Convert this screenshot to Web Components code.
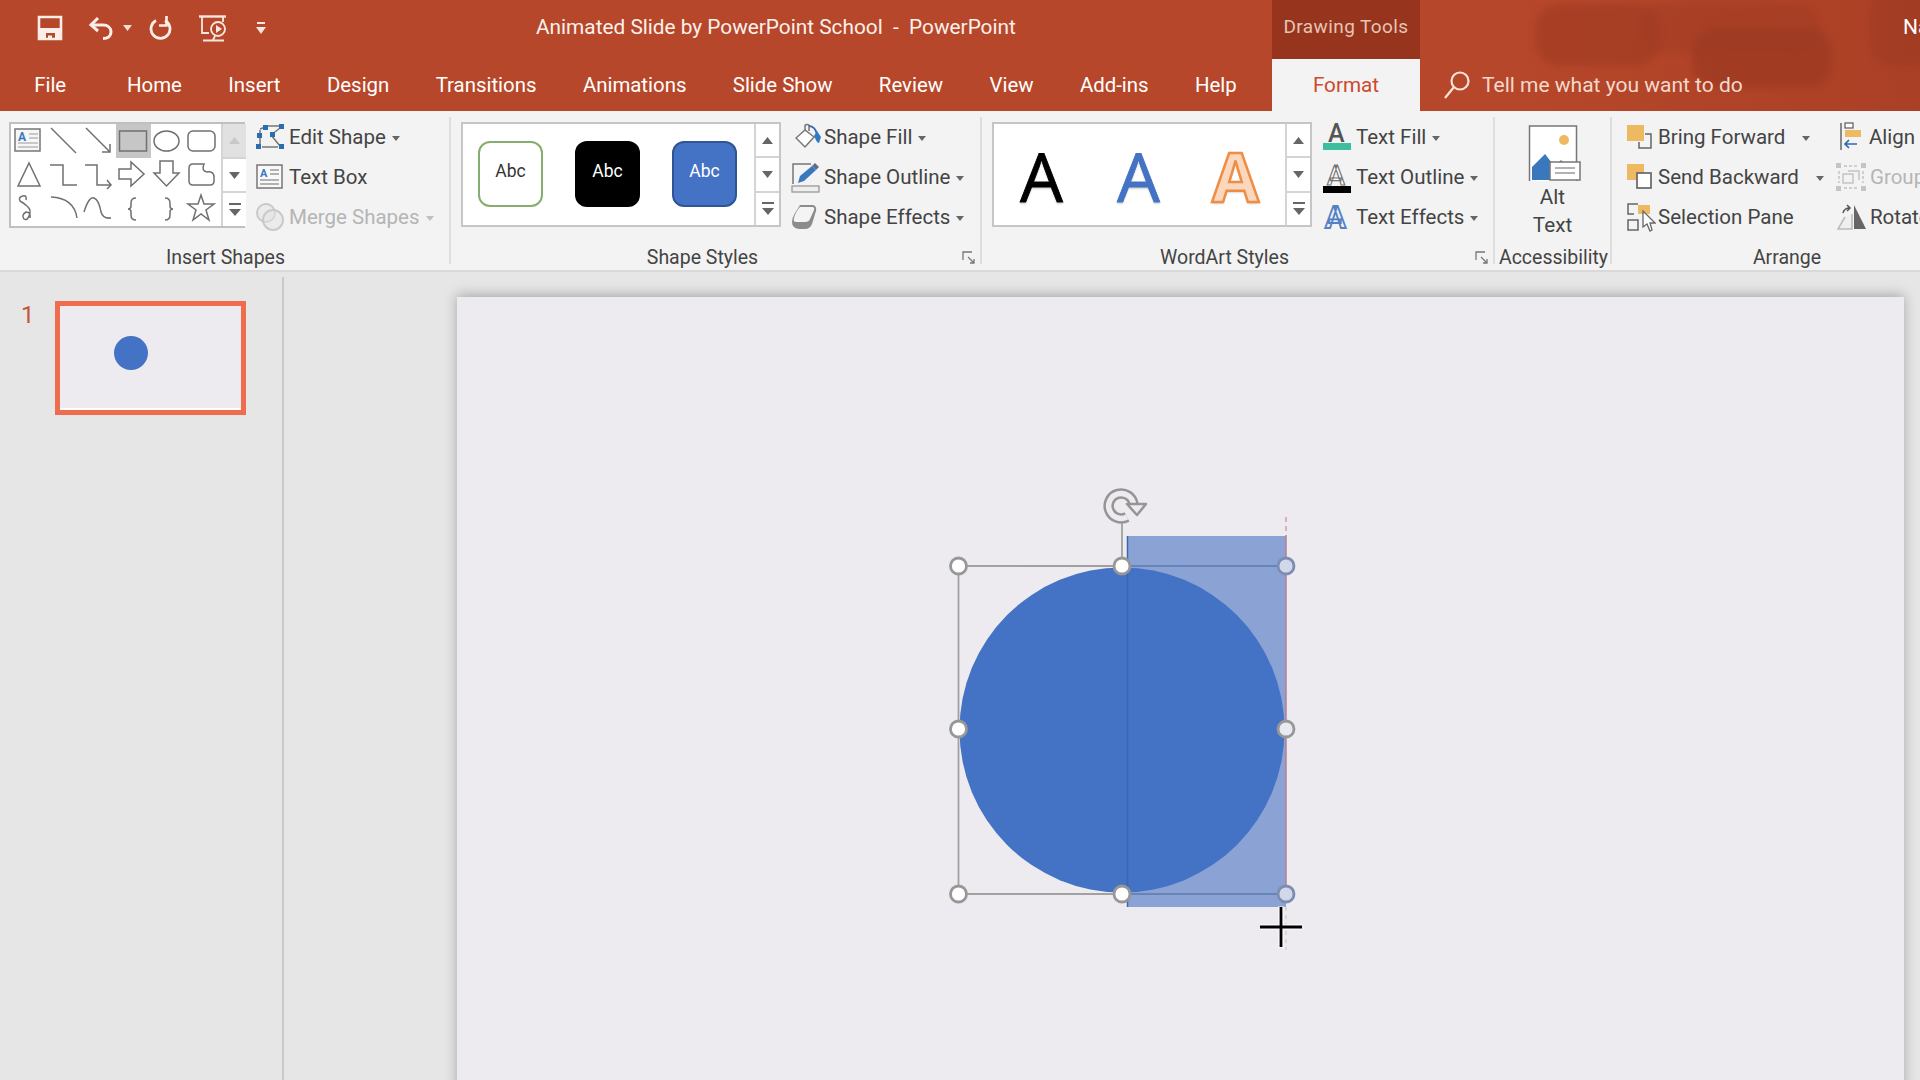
<!DOCTYPE html>
<html lang="en"><head><meta charset="utf-8"><title>Animated Slide by PowerPoint School - PowerPoint</title>
<style>html,body{margin:0;padding:0;background:#e6e6e6;overflow:hidden}body{font-family:Roboto,"Liberation Sans",sans-serif}</style>
</head><body>
<ppt-app>
  <ppt-header slot="head">
  <ppt-titlebar>
    <svg slot="qat" style="margin-left:37px" width="26" height="26" viewBox="0 0 26 26" fill="none" stroke="#fbeee8" stroke-width="2.600"><path d="M2 2H24V24H2Z"/><path d="M2 13H24V24H18V18H9V24H2Z" fill="#fbeee8" stroke="none"/><path d="M11 20.500h4v3h-4z" fill="#fbeee8" stroke="none"/></svg>
    <svg slot="qat" style="margin-left:25px" width="26" height="24" viewBox="0 0 26 24" fill="none" stroke="#fbeee8" stroke-width="3"><path d="M10 2L3 9L10 15"/><path d="M3 9H15C20 9 23 12 23 16C23 20 20 22.500 15 22.500"/></svg>
    <svg slot="qat" style="margin-left:9px" width="9" height="6" viewBox="0 0 9 6"><path d="M0 0H9L4.500 6Z" fill="#f3ddd5"/></svg>
    <svg slot="qat" style="margin-left:17px" width="25" height="24" viewBox="0 0 25 24" fill="none" stroke="#fbeee8" stroke-width="2.800"><path d="M7 4.500A9.500 9.500 0 1 0 16 4.500"/><path d="M17.500 0V9.500H10" stroke-width="2.600"/></svg>
    <svg slot="qat" style="margin-left:24px" width="30" height="27" viewBox="0 0 30 27" fill="none" stroke="#f7e7e1" stroke-width="1.800"><path d="M1 1.500H28" stroke-width="2.400"/><path d="M4 2V18H11"/><path d="M25 2V7"/><circle cx="20" cy="14" r="7"/><path d="M18 10L24 14L18 18Z" fill="#f7e7e1" stroke="none"/><path d="M5 25.500H26M15 25L17 21"/></svg>
    <svg slot="qat" style="margin-left:28px" width="10" height="13" viewBox="0 0 10 13"><path d="M1 1H9" stroke="#f7e7e1" stroke-width="2"/><path d="M0 5H10L5 12Z" fill="#f7e7e1"/></svg>
    <span slot="caption">Animated Slide by PowerPoint School &nbsp;-&nbsp; PowerPoint</span>
    <span slot="context">Drawing Tools</span>
    <span slot="user">Na</span>
  </ppt-titlebar>
  <ppt-tabs>
    <ppt-tab style="margin-right:14.500px">File</ppt-tab>
    <ppt-tab>Home</ppt-tab><ppt-tab>Insert</ppt-tab><ppt-tab>Design</ppt-tab><ppt-tab>Transitions</ppt-tab><ppt-tab>Animations</ppt-tab><ppt-tab>Slide Show</ppt-tab><ppt-tab>Review</ppt-tab><ppt-tab>View</ppt-tab><ppt-tab>Add-ins</ppt-tab><ppt-tab>Help</ppt-tab>
    <ppt-tab slot="active">Format</ppt-tab>
    <svg slot="search" width="28" height="30" viewBox="0 0 28 30" fill="none" stroke="#f7e3da" stroke-width="2.200"><circle cx="17" cy="11" r="8.500"/><path d="M11 17L2 28"/></svg>
    <span slot="tell">Tell me what you want to do</span>
  </ppt-tabs>
  </ppt-header>
  <ppt-ribbon slot="ribbon">
    <ppt-group label="Insert Shapes" width="451" pad="9">
      <ppt-shapes></ppt-shapes>
      <ppt-col style="margin-left:10px">
        <ppt-btn caret label="Edit Shape"><svg slot="icon" width="30" height="26" viewBox="0 0 30 26" fill="none"><path d="M5 5L13 2H24M25 4L16 11L25 22M5 22V6M7 23H23" stroke="#777" stroke-width="1.500"/><g fill="#2e6cb0"><rect x="8" y="1" width="5" height="5"/><rect x="24" y="0" width="5" height="5"/><rect x="2" y="9" width="5" height="5"/><rect x="15" y="8" width="5" height="5"/><rect x="1" y="20" width="5" height="5"/><rect x="24" y="20" width="5" height="5"/></g></svg></ppt-btn>
        <ppt-btn label="Text Box"><svg slot="icon" width="30" height="26" viewBox="0 0 30 26"><rect x="2" y="1" width="25" height="23" fill="#f8f8f8" stroke="#777" stroke-width="1.500"/><text x="5" y="13" font-size="11" font-weight="700" fill="#3a78bd" font-family="Roboto">A</text><path d="M15 6H24M15 10H24M5 16H24M5 20H24" stroke="#9a9a9a" stroke-width="1.300"/></svg></ppt-btn>
        <ppt-btn caret disabled label="Merge Shapes"><svg slot="icon" width="30" height="30" viewBox="0 0 30 30" fill="#e4e4e4" fill-opacity=".5" stroke="#c9c9c9" stroke-width="2"><circle cx="11" cy="11" r="9"/><circle cx="18" cy="18" r="10"/></svg></ppt-btn>
      </ppt-col>
    </ppt-group>
    <ppt-group label="Shape Styles" width="531" launcher pad="10" labelshift="28">
      <ppt-gallery w="320">
        <ppt-abc style="margin-left:15px;border:2px solid #85ad6e;background:#fff;color:#333">Abc</ppt-abc>
        <ppt-abc style="margin-left:32px;background:#000;color:#fff">Abc</ppt-abc>
        <ppt-abc style="margin-left:32px;background:#4472c4;border:2px solid #2f5597;color:#fff">Abc</ppt-abc>
      </ppt-gallery>
      <ppt-col style="margin-left:10px;--iw:33px">
        <ppt-btn caret label="Shape Fill"><svg slot="icon" style="margin-left:4px" width="26" height="28" viewBox="0 0 26 28" fill="none" stroke="#777" stroke-width="1.500"><path d="M10 9V3C10 1 14 1 14 3V8"/><path d="M10 7L1 15L10 24L19 14Z" fill="#fff"/><path d="M14 3C18 3 21 7 22 11" stroke="#2e6cb0" stroke-width="2"/><path d="M19 13L22 8L26 14L24 20C22 20 21 17 19 13Z" fill="#2e7bc4" stroke="none"/></svg></ppt-btn>
        <ppt-btn caret label="Shape Outline"><svg slot="icon" width="29" height="31" viewBox="0 0 29 31" fill="none"><path d="M2 22V2H20" stroke="#777" stroke-width="1.500"/><path d="M7 21L9 14L21 4L25 8L13 19Z" fill="#3a78bd"/><path d="M21 4L24 1L28 5L25 8Z" fill="#5c6f8f"/><rect x="1" y="24" width="27" height="6" fill="#eee" stroke="#999" stroke-width="1.300"/></svg></ppt-btn>
        <ppt-btn caret label="Shape Effects"><svg slot="icon" width="26" height="26" viewBox="0 0 26 26"><path d="M9 1H22Q26 2 25 7L21 20Q19 25 14 25H8Q1 24 1 18Q1 14 4 9Z" fill="#8c8c8c"/><path d="M9 3H21Q24 3 23 6L19 15Q18 18 14 18H5Q2 18 3 14Q5 7 9 3Z" fill="#f4f4f4"/></svg></ppt-btn>
      </ppt-col>
    </ppt-group>
    <ppt-group label="WordArt Styles" width="513" launcher pad="10" labelshift="28">
      <ppt-gallery w="320" disabledup>
        <ppt-wa style="margin-left:24px;color:#000;-webkit-text-stroke:.8px #000">A</ppt-wa>
        <ppt-wa style="margin-left:50px;color:#4472c4;-webkit-text-stroke:.8px #4472c4">A</ppt-wa>
        <ppt-wa style="margin-left:50px;color:#fbd8bd;font-weight:700;-webkit-text-stroke:2.500px #ee8d45">A</ppt-wa>
      </ppt-gallery>
      <ppt-col style="margin-left:11px;--iw:33px">
        <ppt-btn caret label="Text Fill"><svg slot="icon" width="28" height="28" viewBox="0 0 28 28"><text x="5" y="19" font-size="25" font-weight="500" fill="#555" font-family="Roboto">A</text><rect x="0" y="20" width="28" height="7" fill="#3dbf9e"/></svg></ppt-btn>
        <ppt-btn caret label="Text Outline"><svg slot="icon" width="28" height="31" viewBox="0 0 28 31"><text x="4" y="23" font-size="27" fill="#fff" stroke="#777" stroke-width="1.200" font-family="Roboto" font-weight="500">A</text><rect x="0" y="24" width="28" height="7" fill="#000"/></svg></ppt-btn>
        <ppt-btn caret label="Text Effects"><svg slot="icon" width="28" height="28" viewBox="0 0 28 28"><text x="2" y="25" font-size="31" fill="#eef3fb" stroke="#5580c4" stroke-width="1.800" font-family="Roboto" font-weight="700">A</text></svg></ppt-btn>
      </ppt-col>
    </ppt-group>
    <ppt-group label="Accessibility" width="117" pad="0">
      <ppt-big><svg slot="icon" width="54" height="56" viewBox="0 0 54 56"><rect x="1.500" y="1" width="47" height="57" fill="#fff" stroke="#777" stroke-width="1.500"/><circle cx="36" cy="15" r="5" fill="#edb962"/><path d="M4 55V42L17 29L27 42L33 35L45 47V55Z" fill="#3a78bd"/><rect x="22" y="37" width="30" height="18" fill="#fff" stroke="#777" stroke-width="1.500"/><path d="M27 43H47M27 48H47" stroke="#999" stroke-width="1.400"/></svg>Alt<br>Text</ppt-big>
    </ppt-group>
    <ppt-group label="Arrange" width="308" pad="14" last labelshift="42">
      <ppt-col style="--iw:32px">
        <ppt-btn label="Bring Forward" gap="22"><svg slot="icon" width="26" height="28" viewBox="0 0 26 28"><rect x="1" y="2" width="17" height="16" fill="#edb962"/><path d="M19 11H25V25H13V19" fill="none" stroke="#666" stroke-width="1.500"/></svg></ppt-btn>
        <ppt-btn label="Send Backward" gap="22"><svg slot="icon" width="26" height="28" viewBox="0 0 26 28"><rect x="1" y="1" width="17" height="16" fill="#edb962"/><rect x="11" y="10" width="14" height="15" fill="#fff" stroke="#666" stroke-width="1.700"/></svg></ppt-btn>
        <ppt-btn label="Selection Pane"><svg slot="icon" width="30" height="30" viewBox="0 0 30 30" fill="none"><path d="M12 2H2V12H8M2 18H12V28H2Z" stroke="#666" stroke-width="1.500"/><rect x="12" y="3" width="12" height="9" fill="#edb962"/><path d="M17 9V25L21 22L24 29L26 28L24 21H29Z" fill="#fff" stroke="#666" stroke-width="1.300"/></svg></ppt-btn>
      </ppt-col>
      <ppt-col style="margin-left:15px">
        <ppt-btn label="Align" tight><svg slot="icon" width="26" height="30" viewBox="0 0 26 30" fill="none"><path d="M2 1V28" stroke="#666" stroke-width="1.500"/><rect x="6" y="1" width="8" height="5" fill="#fff" stroke="#666" stroke-width="1.300"/><rect x="6" y="8" width="16" height="7" fill="#edb962"/><path d="M6 22H18M10 18L6 22L10 26" stroke="#2e6cb0" stroke-width="1.700"/></svg></ppt-btn>
        <ppt-btn disabled label="Group" style="margin-left:-3px"><svg slot="icon" width="30" height="28" viewBox="0 0 30 28" fill="none" stroke="#c4c4c4" stroke-width="1.500"><path d="M8 3H22M8 25H22M3 8V20M27 8V20" stroke-dasharray="3 2"/><path d="M12 8H23V17M7 11H17V20H7Z"/><g fill="#c4c4c4" stroke="none"><rect x="0" y="0" width="5" height="5"/><rect x="25" y="0" width="5" height="5"/><rect x="0" y="23" width="5" height="5"/><rect x="25" y="23" width="5" height="5"/></g></svg></ppt-btn>
        <ppt-btn label="Rotate" style="margin-left:-3px"><svg slot="icon" width="30" height="26" viewBox="0 0 30 26"><path d="M16 10V25H2L9 13" fill="#efefef" stroke="#bbb" stroke-width="1.500"/><path d="M18 1L30 25H18Z" fill="#666"/><path d="M7 9Q8 4 14 4M11 1L14 4L11 7" fill="none" stroke="#555" stroke-width="1.500"/></svg></ppt-btn>
      </ppt-col>
    </ppt-group>
  </ppt-ribbon>
  <ppt-workspace slot="work">
    <ppt-thumb slot="thumbs" num="1"></ppt-thumb>
    <ppt-slide slot="canvas"></ppt-slide>
  </ppt-workspace>
</ppt-app>
<script>
function def(name, html, init){
  customElements.define(name, class extends HTMLElement{
    constructor(){super();const r=this.attachShadow({mode:'open'});r.innerHTML=html;}
    connectedCallback(){if(init)init(this,this.shadowRoot);}
  });
}
def('ppt-app',`<style>:host{display:flex;flex-direction:column;width:1920px;height:1080px;overflow:hidden;background:#e6e6e6}</style><slot name="head"></slot><slot name="ribbon"></slot><slot name="work"></slot>`);
def('ppt-header',`<style>
:host{display:block;position:relative;height:111px;flex:none;overflow:hidden;background:linear-gradient(90deg,#b7472a 0,#b7472a 1500px,#aa4026 1920px);color:#fff}
.blot{position:absolute;filter:blur(3px);border-radius:24px;background:#9c3a22}
.top{position:relative;z-index:1}
</style>
<div class="blot" style="left:1535px;width:125px;top:4px;height:62px;opacity:.5"></div>
<div class="blot" style="left:1640px;width:180px;top:3px;height:50px;opacity:.35"></div>
<div class="blot" style="left:1692px;width:140px;top:28px;height:60px;opacity:.7"></div>
<div class="blot" style="left:1870px;width:70px;top:-10px;height:76px;opacity:.5"></div>
<div class="top"><slot></slot></div>`);
def('ppt-titlebar',`<style>
:host{display:flex;height:59px;color:#fff;overflow:hidden}
.qat{flex:0 0 536px;display:flex;align-items:center;height:56px}
.cap{flex:0 0 736px;font-size:20.800px;line-height:54px;white-space:pre;color:#fbf1ec}
.ctx{flex:0 0 148px;background:#97341d;text-align:center;font-size:19px;line-height:54px;color:#e7c4b6;letter-spacing:.4px}
.user{flex:1;padding-left:483px;font-size:21px;line-height:54px;white-space:nowrap}
</style><div class="qat"><slot name="qat"></slot></div><div class="cap"><slot name="caption"></slot></div><div class="ctx"><slot name="context"></slot></div><div class="user"><slot name="user"></slot></div>`);
def('ppt-tabs',`<style>
:host{display:flex;height:52px;color:#fff;align-items:stretch;padding-left:11px}
.list{display:flex;flex:0 0 1261px}
.fmt{flex:0 0 148px;display:flex}
.s{display:flex;align-items:center;padding-left:23px;gap:11px;font-size:21px;color:#f4d9cd;white-space:nowrap;height:52px}
</style><div class="list"><slot></slot></div><div class="fmt"><slot name="active"></slot></div><div class="s"><slot name="search"></slot><slot name="tell"></slot></div>`);
def('ppt-tab',`<style>
:host{display:flex;align-items:center;padding:0 23.200px 0;font-size:20.400px;white-space:nowrap;color:#fff;height:51px}
:host([slot=active]){background:#f3f3f3;color:#cc4a2f;flex:1;justify-content:center;padding:0;height:52px;font-size:20.700px}
</style><slot></slot>`);
def('ppt-ribbon',`<style>:host{display:flex;height:161px;background:#f3f3f3;border-bottom:2px solid #d9d9d9;box-sizing:border-box;overflow:hidden;flex:none;color:#444;font-size:20px}</style><slot></slot>`);
def('ppt-group',`<style>
:host{display:flex;flex-direction:column;flex:none;box-sizing:border-box;position:relative;height:159px}
.body{display:flex;height:134px;padding-top:6px;box-sizing:border-box}
.lab{height:25px;text-align:center;font-size:19.500px;line-height:26px;color:#444;white-space:nowrap}
.rule{position:absolute;right:0;top:6px;bottom:6px;width:2px;background:#dedede}
.lau{position:absolute;right:7px;bottom:1px}
</style><div class="body"><slot></slot></div><div class="lab"></div><div class="rule"></div>`,(h,r)=>{
  h.style.width=h.getAttribute('width')+'px';
  r.querySelector('.body').style.paddingLeft=(h.getAttribute('pad')||0)+'px';
  const l=r.querySelector('.lab');l.textContent=h.getAttribute('label');
  if(h.hasAttribute('labelshift')){const s=+h.getAttribute('labelshift');if(h.hasAttribute('last'))l.style.paddingLeft=s+'px';else l.style.paddingRight=s+'px';}
  if(h.hasAttribute('last'))r.querySelector('.rule').style.display='none';
  if(h.hasAttribute('launcher')&&!r.querySelector('.lau')){const s=document.createElement('div');s.className='lau';s.innerHTML='<svg width="13" height="13" viewBox="0 0 13 13" fill="none" stroke="#777" stroke-width="1.300"><path d="M1 9V1H10"/><path d="M6 6L12 12M12 8V12H8"/></svg>';r.appendChild(s);}
});
def('ppt-col',`<style>:host{display:flex;flex-direction:column;flex:none}</style><slot></slot>`);
def('ppt-btn',`<style>
:host{display:flex;align-items:center;height:40px;font-size:20.500px;color:#444;white-space:nowrap}
:host([disabled]){color:#b5b5b5}
.i{width:var(--iw,34px);flex:none;display:flex;align-items:center;justify-content:flex-start}
.c{display:inline-block;margin-left:6px;border:4.500px solid transparent;border-top:5.500px solid #666;border-bottom:0;margin-top:2px}
:host([disabled]) .c{border-top-color:#c0c0c0}
</style><span class="i"><slot name="icon"></slot></span><span class="t"></span>`,(h,r)=>{
  r.querySelector('.t').textContent=h.getAttribute('label');
  if(h.hasAttribute('tight'))r.querySelector('.i').style.width='30px';
  if((h.hasAttribute('caret')||h.hasAttribute('gap'))&&!r.querySelector('.c')){const c=document.createElement('span');c.className='c';if(h.hasAttribute('gap'))c.style.marginLeft=h.getAttribute('gap')-5+'px';r.appendChild(c);}
});
const tri=(d,col)=>d=='up'?`<svg width="11" height="7" viewBox="0 0 11 7"><path d="M0 7L5.500 0L11 7Z" fill="${col}"/></svg>`:d=='down'?`<svg width="11" height="7" viewBox="0 0 11 7"><path d="M0 0L5.500 7L11 0Z" fill="${col}"/></svg>`:`<svg width="12" height="14" viewBox="0 0 12 14"><path d="M0 1H12" stroke="${col}" stroke-width="2"/><path d="M0 6H12L6 13Z" fill="${col}"/></svg>`;
def('ppt-scroll',`<style>
:host{display:flex;flex-direction:column;width:25px;flex:none;border-left:2px solid #d4d4d4;box-sizing:border-box;background:#fff}
div{flex:1;display:flex;align-items:center;justify-content:center;border-bottom:2px solid #d4d4d4}
div:last-child{border-bottom:0}
.off{background:#e1e1e1}
</style><div class="u"></div><div class="d"></div><div class="m"></div>`,(h,r)=>{
  const off=h.hasAttribute('off');
  const u=r.querySelector('.u');u.innerHTML=tri('up',off?'#c8c8c8':'#666');if(off)u.classList.add('off');
  r.querySelector('.d').innerHTML=tri('down','#666');r.querySelector('.m').innerHTML=tri('more','#666');
});
def('ppt-gallery',`<style>
:host{display:flex;height:105px;box-sizing:border-box;border:2px solid #c6c6c6;background:#fff;flex:none;margin-top:5px}
.g{flex:1;display:flex;align-items:center;padding-bottom:2px}
</style><div class="g"><slot></slot></div><ppt-scroll></ppt-scroll>`,(h,r)=>{
  h.style.width=h.getAttribute('w')+'px';
  if(h.hasAttribute('disabledup'))r.querySelector('ppt-scroll').setAttribute('off','');
});
def('ppt-abc',`<style>:host{display:flex;align-items:center;justify-content:center;width:65px;height:66px;border-radius:12px;box-sizing:border-box;font-size:17.500px;padding-bottom:6px;flex:none}</style><slot></slot>`);
def('ppt-wa',`<style>:host{display:block;font-size:68px;line-height:80px;width:47px;text-align:center;flex:none;font-family:"Open Sans",Roboto,sans-serif;text-shadow:0 2px 2px rgba(0,0,0,.18);padding-top:4px}</style><slot></slot>`);
def('ppt-big',`<style>:host{display:flex;flex-direction:column;align-items:center;width:115px;font-size:20.700px;line-height:28px;text-align:center;color:#444}
::slotted(svg){margin:8px 0 1.500px 4px}</style><slot name="icon"></slot><div><slot></slot></div>`);
const S='stroke="#707070" stroke-width="1.500" fill="none"';
const cells=[
 `<rect x="4" y="5" width="25" height="22" fill="#f6f6f6" stroke="#777" stroke-width="1.500"/><text x="7" y="17" font-size="12" font-weight="700" fill="#3a78bd" font-family="Roboto">A</text><path d="M18 10H27M18 14H27M7 19H27M7 23H27" stroke="#9a9a9a" stroke-width="1.200"/>`,
 `<path d="M5 4L30 29" ${S}/>`,
 `<path d="M5 4L29 28M29 20V28H21" ${S}/>`,
 `<rect x="3.500" y="7" width="27" height="20" ${S}/>`,
 `<ellipse cx="15.500" cy="17" rx="12.500" ry="10" ${S}/>`,
 `<rect x="2" y="7" width="27" height="20" rx="5" ${S}/>`,
 `<path d="M18 5L29 28H7Z" ${S}/>`,
 `<path d="M4 7H17V27H31" ${S}/>`,
 `<path d="M4 7H16V27H30M26 22L30 27L26 31" ${S}/>`,
 `<path d="M3 11H15V4L28 16L15 28V21H3Z" ${S}/>`,
 `<path d="M9 3H22V15H28L15.500 28L3 15H9Z" ${S}/>`,
 `<path d="M3 10Q3 6 7 6H18Q15 13 21 14Q27 13 28 18V23Q28 27 24 27H7Q3 27 3 23Z" ${S}/>`,
 `<path d="M12 4Q7 5 9 9Q14 12 16 14Q21 18 18 24Q16 29 13 27Q10 23 15 20Q20 20 19 26" ${S}/><path d="M12 4Q16 3 15 8" ${S}/>`,
 `<path d="M5 5Q28 6 31 26" ${S}/>`,
 `<path d="M3 20Q8 4 13 6Q18 8 20 20Q22 27 30 26" ${S}/>`,
 `<path d="M20 6Q15 6 15 11V14Q15 17 12 17Q15 17 15 20V23Q15 28 20 28" ${S}/>`,
 `<path d="M14 6Q19 6 19 11V14Q19 17 22 17Q19 17 19 20V23Q19 28 14 28" ${S}/>`,
 `<path d="M15 3L18 12H28L20 18L23 28L15 22L7 28L10 18L2 12H12Z" ${S}/>`
];
def('ppt-shapes',`<style>
:host{display:flex;width:236px;height:106px;box-sizing:border-box;border:2px solid #c0c0c0;background:#fff;flex:none;margin-top:5px}
.g{display:grid;grid-template-columns:repeat(6,35px);grid-auto-rows:1fr;flex:1}
.g div{display:flex}
.on{background:#c6c6c6}
svg{width:35px;height:34px}
</style><div class="g">${cells.map((c,i)=>`<div class="${i==3?'on':''}"><svg viewBox="0 0 35 34">${c}</svg></div>`).join('')}</div><ppt-scroll off></ppt-scroll>`);
def('ppt-workspace',`<style>
:host{display:flex;flex:1;min-height:0;background:#e6e6e6}
.t{flex:0 0 284px;box-sizing:border-box;border-right:2px solid #c9c9c9;margin-top:5px;}
.c{flex:1;min-width:0;padding:25px 0 0 173px;overflow:hidden}
</style><div class="t"><slot name="thumbs"></slot></div><div class="c"><slot name="canvas"></slot></div>`);
def('ppt-thumb',`<style>
:host{display:flex;padding:24px 0 0 21px;gap:23px}
.n{font-size:24px;color:#c4543a;line-height:28px;width:11px}
.b{width:191px;height:114px;box-sizing:border-box;border:5px solid #ef6d4e;background:#edebf0;position:relative;box-shadow:inset 0 -2px 0 #fff}
.d{position:absolute;left:54px;top:30px;width:34px;height:34px;border-radius:50%;background:#4472c4}
</style><div class="n">1</div><div class="b"><div class="d"></div></div>`);
def('ppt-slide',`<style>
:host{display:block;width:1447px;height:900px;background:#edebf0;position:relative;box-shadow:0 -2px 12px rgba(0,0,0,.28)}
svg{position:absolute;left:0;top:0}
</style>
<svg width="1447" height="760" viewBox="457 297 1447 760" fill="none">
  <rect x="1127" y="536" width="159" height="371" fill="#8aa3d4"/>
  <circle cx="1122" cy="730" r="162.500" fill="#4472c4"/>
  <path d="M1127.500 536V907" stroke="#3d66b0" stroke-width="1.500"/>
  <path d="M1286 517V535" stroke="#d99aa5" stroke-width="1.500" stroke-dasharray="5 4"/>
  <path d="M1286 535V900" stroke="#b77f8f" stroke-width="1.500"/>
  <path d="M1286 907V950" stroke="#d8c8cc" stroke-width="1.200" stroke-dasharray="4 4"/>
  <g stroke="#9a9a9a" stroke-width="1.800" opacity=".9">
    <path d="M958.500 566H1127M958.500 566V894M958.500 894H1127"/>
    <path d="M1122 523V566"/>
  </g>
  <path d="M1127 566H1286M1127 894H1286" stroke="#6883b5" stroke-width="1.800"/>
  <path d="M1133.500 504A12.500 12.500 0 1 0 1127 517" stroke="#959595" stroke-width="10.500"/>
  <path d="M1133.500 504A12.500 12.500 0 1 0 1127 517" stroke="#edebf0" stroke-width="5.500"/>
  <path d="M1127 504L1146 504L1137 515Z" fill="#edebf0" stroke="#959595" stroke-width="2.500" stroke-linejoin="round"/>
  <g fill="#fff" stroke="#979797" stroke-width="2.800">
    <circle cx="958.500" cy="566" r="8"/><circle cx="1122" cy="566" r="8"/>
    <circle cx="958.500" cy="729" r="8"/><circle cx="958.500" cy="894" r="8"/><circle cx="1122" cy="894" r="8"/>
    <circle cx="1286" cy="729" r="8" fill="#e8e9f1"/>
  </g>
  <g stroke="#7c8db1" stroke-width="2.800" fill="#d0d8ea"><circle cx="1286" cy="566" r="8"/><circle cx="1286" cy="894" r="8"/></g>
  <path d="M1281 906V948M1260 927H1302" stroke="#fff" stroke-width="6" opacity=".5"/>
  <path d="M1281 907V947M1260 927H1302" stroke="#000" stroke-width="2.800"/>
</svg>`);
</script>
</body></html>
